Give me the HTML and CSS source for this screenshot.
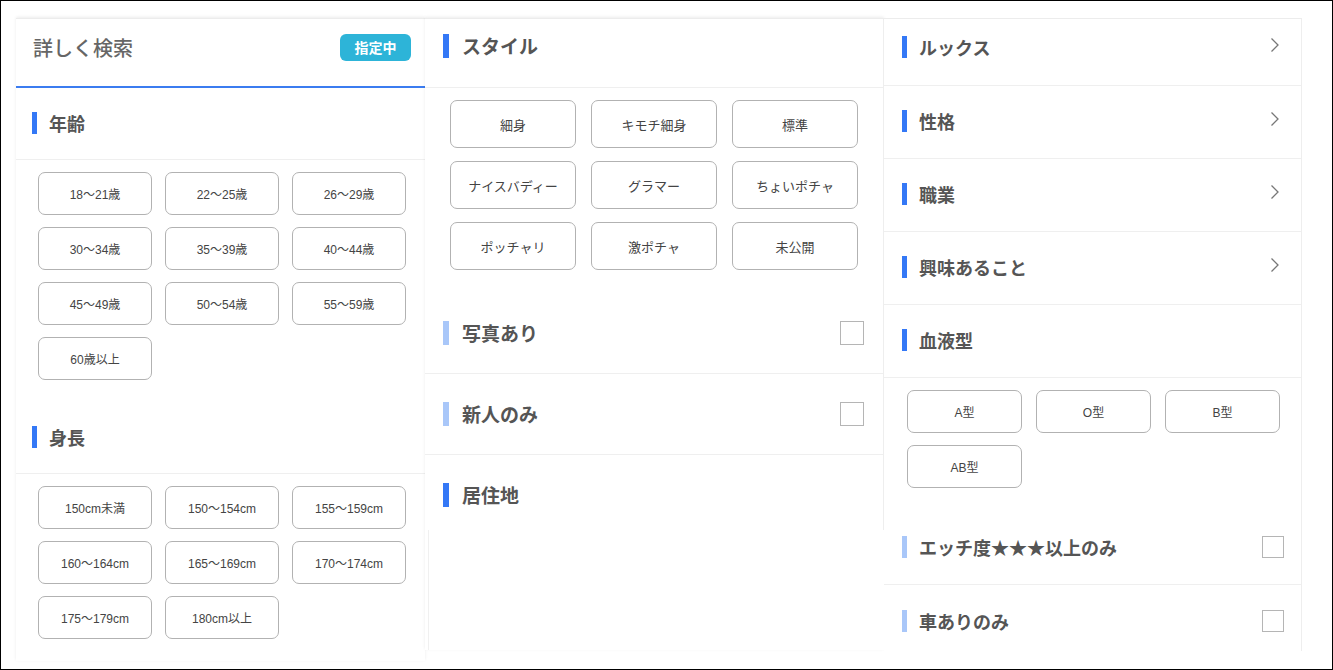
FILE: index.html
```html
<!DOCTYPE html>
<html lang="ja">
<head>
<meta charset="utf-8">
<title>詳しく検索</title>
<link rel="stylesheet" href="styles.css">
</head>
<body>
<div class="frame">
  <div class="panel p1">
    <div class="p1-header">
      <span class="title">詳しく検索</span>
      <span class="badge">指定中</span>
    </div>
    <div class="p1-head"><span class="bar"></span><span class="htxt">年齢</span></div>
    <div class="grid g1">
      <div class="btn">18〜21歳</div>
      <div class="btn">22〜25歳</div>
      <div class="btn">26〜29歳</div>
      <div class="btn">30〜34歳</div>
      <div class="btn">35〜39歳</div>
      <div class="btn">40〜44歳</div>
      <div class="btn">45〜49歳</div>
      <div class="btn">50〜54歳</div>
      <div class="btn">55〜59歳</div>
      <div class="btn">60歳以上</div>
    </div>
    <div class="p1-head"><span class="bar"></span><span class="htxt">身長</span></div>
    <div class="grid g1">
      <div class="btn">150cm未満</div>
      <div class="btn">150〜154cm</div>
      <div class="btn">155〜159cm</div>
      <div class="btn">160〜164cm</div>
      <div class="btn">165〜169cm</div>
      <div class="btn">170〜174cm</div>
      <div class="btn">175〜179cm</div>
      <div class="btn">180cm以上</div>
    </div>
  </div>

  <div class="panel p2">
    <div class="p2-upper">
      <div class="p2-head"><span class="bar bar2"></span><span class="htxt h2">スタイル</span></div>
      <div class="grid g2">
        <div class="btn btn2">細身</div>
        <div class="btn btn2">キモチ細身</div>
        <div class="btn btn2">標準</div>
        <div class="btn btn2">ナイスバディー</div>
        <div class="btn btn2">グラマー</div>
        <div class="btn btn2">ちょいポチャ</div>
        <div class="btn btn2">ポッチャリ</div>
        <div class="btn btn2">激ポチャ</div>
        <div class="btn btn2">未公開</div>
      </div>
      <div class="p2-row line"><span class="lead"><span class="bar bar2 light"></span><span class="htxt h2">写真あり</span></span><span class="check"></span></div>
      <div class="p2-row line"><span class="lead"><span class="bar bar2 light"></span><span class="htxt h2">新人のみ</span></span><span class="check"></span></div>
      <div class="p2-row last"><span class="lead"><span class="bar bar2"></span><span class="htxt h2">居住地</span></span></div>
    </div>
    <div class="p2-lower"></div>
  </div>

  <div class="panel p3">
    <div class="p3-row first"><span class="lead"><span class="bar"></span><span class="htxt">ルックス</span></span><svg class="chev" width="10" height="16" viewBox="0 0 10 16"><polyline points="1.5,1.5 8,8 1.5,14.5" fill="none" stroke="#777" stroke-width="1.3"/></svg></div>
    <div class="p3-row"><span class="lead"><span class="bar"></span><span class="htxt">性格</span></span><svg class="chev" width="10" height="16" viewBox="0 0 10 16"><polyline points="1.5,1.5 8,8 1.5,14.5" fill="none" stroke="#777" stroke-width="1.3"/></svg></div>
    <div class="p3-row"><span class="lead"><span class="bar"></span><span class="htxt">職業</span></span><svg class="chev" width="10" height="16" viewBox="0 0 10 16"><polyline points="1.5,1.5 8,8 1.5,14.5" fill="none" stroke="#777" stroke-width="1.3"/></svg></div>
    <div class="p3-row"><span class="lead"><span class="bar"></span><span class="htxt">興味あること</span></span><svg class="chev" width="10" height="16" viewBox="0 0 10 16"><polyline points="1.5,1.5 8,8 1.5,14.5" fill="none" stroke="#777" stroke-width="1.3"/></svg></div>
    <div class="p3-row"><span class="lead"><span class="bar"></span><span class="htxt">血液型</span></span></div>
    <div class="grid g3">
      <div class="btn">A型</div>
      <div class="btn">O型</div>
      <div class="btn">B型</div>
      <div class="btn">AB型</div>
    </div>
    <div class="p3-row short"><span class="lead"><span class="bar light"></span><span class="htxt">エッチ度★★★以上のみ</span></span><span class="check small"></span></div>
    <div class="p3-row nob"><span class="lead"><span class="bar light"></span><span class="htxt">車ありのみ</span></span><span class="check small"></span></div>
  </div>
</div>
</body>
</html>
```
FILE: styles.css
```css
* { box-sizing: border-box; }
html, body { margin: 0; padding: 0; background: #fff; }
body {
  font-family: "Liberation Sans", "Noto Sans CJK JP", sans-serif;
  color: #444;
}
.frame {
  width: 1333px;
  height: 670px;
  border: 1px solid #000;
  background: #fff;
  padding: 17px 0 0 15px;
  display: flex;
  align-items: flex-start;
  overflow: hidden;
}
.panel { background: #fff; }
.p1, .p2 { box-shadow: 0 -1px 3px rgba(0,0,0,0.08); border-top: 1px solid #ececec; }

.p1 { width: 409px; }
.p1-header {
  height: 69px;
  border-bottom: 2px solid #3b7cf0;
  display: flex;
  align-items: center;
  justify-content: space-between;
  padding: 0 14px 11px 17px;
}
.title {
  font-family: "Noto Sans CJK JP", sans-serif;
  font-size: 20px;
  font-weight: 500;
  color: #666;
}
.badge {
  width: 71px;
  height: 27px;
  border-radius: 6px;
  background: #2db4d8;
  color: #fff;
  font-family: "Noto Sans CJK JP", sans-serif;
  font-weight: 700;
  font-size: 14px;
  display: flex;
  align-items: center;
  justify-content: center;
}
.p1-head {
  height: 72px;
  border-bottom: 1px solid #efefef;
  display: flex;
  align-items: center;
  padding: 0 0 2px 16px;
}
.bar {
  display: inline-block;
  width: 5px;
  height: 22px;
  background: #3478f6;
  margin-right: 12px;
  flex: none;
}
.bar.light { background: #a9c7f9; }
.bar2 { width: 6px; height: 24px; margin-right: 13px; }
.htxt {
  font-family: "Noto Sans CJK JP", sans-serif;
  font-weight: 700;
  font-size: 18px;
  color: #555;
  line-height: 1;
}
.h2 { font-size: 19px; }
.lead { display: flex; align-items: center; }

.grid { display: grid; }
.g1 {
  grid-template-columns: repeat(3, 114px);
  grid-auto-rows: 43px;
  column-gap: 13px;
  row-gap: 12px;
  padding: 12px 0 22px 22px;
}
.btn {
  border: 1px solid #b2b2b2;
  border-radius: 7px;
  display: flex;
  align-items: center;
  justify-content: center;
  font-size: 12px;
  color: #444;
  background: #fff;
}

.p2 { width: 459px; }
.p2-upper { border-right: 1px solid #eeeeee; }
.p2-head {
  height: 69px;
  border-bottom: 1px solid #efefef;
  display: flex;
  align-items: center;
  padding: 0 0 15px 18px;
}
.g2 {
  grid-template-columns: repeat(3, 126px);
  grid-auto-rows: 48px;
  column-gap: 15px;
  row-gap: 13px;
  padding: 12px 0 23px 25px;
}
.btn2 { font-size: 13px; }
.p2-row {
  height: 81px;
  display: flex;
  align-items: center;
  justify-content: space-between;
  padding: 0 19px 1px 18px;
}
.p2-row.line { border-bottom: 1px solid #efefef; }
.p2-row.last { height: 75px; padding-top: 4px; padding-bottom: 0; }
.check {
  width: 24px;
  height: 24px;
  border: 1.5px solid #b5b5b5;
  background: #fff;
  flex: none;
}
.check.small { width: 22px; height: 22px; }
.p2-lower {
  margin-left: 3px;
  height: 120px;
  border-left: 1px solid #f0f0f0;
}

.p3 {
  width: 418px;
  height: 633px;
  border-top: 1px solid #ececec;
  border-right: 1px solid #eeeeee;
  overflow: hidden;
}
.p3-row {
  height: 73px;
  border-bottom: 1px solid #efefef;
  display: flex;
  align-items: center;
  justify-content: space-between;
  padding: 0 21px 2px 18px;
}
.p3-row.first { height: 67px; padding-bottom: 10px; }
.p3-row.short { height: 57px; padding-bottom: 19px; padding-right: 17px; }
.p3-row.nob { border-bottom: none; padding-right: 17px; }
.chev { flex: none; margin-top: -4px; }
.g3 {
  grid-template-columns: repeat(3, 115px);
  grid-auto-rows: 43px;
  column-gap: 14px;
  row-gap: 12px;
  padding: 12px 0 40px 23px;
}
```
